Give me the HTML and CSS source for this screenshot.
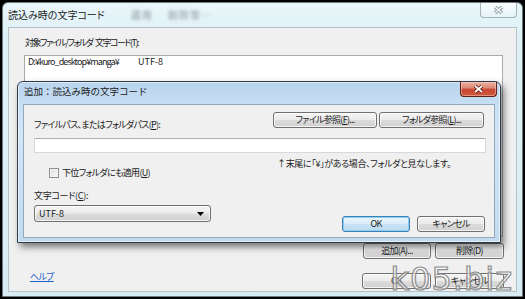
FILE: index.html
```html
<!DOCTYPE html>
<html lang="ja">
<head>
<meta charset="utf-8">
<title>読込み時の文字コード</title>
<link rel="stylesheet" href="styles.css">
</head>
<body>
<div class="desktop">
  <div class="win outer">
    <div class="titlebar">
      <span class="title">読込み時の文字コード</span>
      <span class="ghost">適用 <span class="ghost-gap"></span>削除等…</span>
      <span class="close inactive">
        <svg width="13" height="10" viewBox="0 0 13 10"><path class="x-out" d="M3 2 L10 8 M10 2 L3 8"/><path class="x-in" d="M3 2 L10 8 M10 2 L3 8"/></svg>
      </span>
    </div>
    <div class="client">
      <div class="label outer-label">対象ファイル/フォルダ 文字コード(T):</div>
      <div class="listbox">
        <div class="list-row"><span class="path">D:¥kuro_desktop¥manga¥</span><span class="code">UTF-8</span></div>
      </div>
      <div class="btn-row">
        <div class="btn w68">追加(A)...</div>
        <div class="btn w69">削除(D)</div>
      </div>
      <div class="footer">
        <a class="help" href="#">ヘルプ</a>
        <div class="btn-row tight">
          <div class="btn w69">OK</div>
          <div class="btn w69">キャンセル</div>
        </div>
      </div>
    </div>
  </div>

  <div class="win inner">
    <div class="titlebar">
      <span class="title">追加：読込み時の文字コード</span>
      <span class="close active">
        <svg width="13" height="10" viewBox="0 0 13 10"><path class="x-out" d="M3 2 L10 8 M10 2 L3 8"/><path class="x-in" d="M3 2 L10 8 M10 2 L3 8"/></svg>
      </span>
    </div>
    <div class="client">
      <div class="row1">
        <div class="label">ファイルパス、またはフォルダパス(<u>P</u>):</div>
        <div class="browse">
          <div class="btn w104">ファイル参照(<u>F</u>)...</div>
          <div class="btn w105">フォルダ参照(<u>L</u>)...</div>
        </div>
      </div>
      <div class="textbox"></div>
      <div class="note">↑末尾に「¥」がある場合、フォルダと見なします。</div>
      <div class="check-row">
        <span class="checkbox"></span>
        <span class="label">下位フォルダにも適用(<u>U</u>)</span>
      </div>
      <div class="label code-label">文字コード(<u>C</u>):</div>
      <div class="bottom-row">
        <div class="combo">
          <span>UTF-8</span>
          <svg width="7" height="4" viewBox="0 0 7 4"><path d="M0 0 H7 L3.5 4 Z" fill="#000"/></svg>
        </div>
        <div class="dlg-btns">
          <div class="btn default w68">OK</div>
          <div class="btn w68">キャンセル</div>
        </div>
      </div>
    </div>
  </div>

  <div class="watermark">k05.biz</div>
</div>
</body>
</html>
```
FILE: styles.css
```css
* { box-sizing: border-box; margin: 0; padding: 0; }
html, body { width: 525px; height: 299px; overflow: hidden; }
body {
  background: #000;
  font-family: "Noto Sans CJK JP", "Noto Sans", sans-serif;
  font-size: 10px;
  line-height: 12px;
  color: #1a1a1a;
  font-feature-settings: "palt";
}
u { text-decoration: underline; text-underline-offset: 1px; }

.desktop { position: relative; width: 525px; height: 299px; padding: 2px; }

.win { display: flex; flex-direction: column; }
.titlebar { display: flex; align-items: flex-start; flex: none; }
.title { white-space: nowrap; }

/* body text of dialogs: condensed like Meiryo UI */
.client { font-size: 9px; letter-spacing: -0.7px; }

/* outer (inactive) window */
.outer {
  width: 521px; height: 295px;
  border: 1px solid #6e7b83;
  border-radius: 6px 6px 0 0;
  background: linear-gradient(180deg, #eaf6f9 0%, #dff1f6 10%, #d7edf3 100%);
  padding: 0 5px 4px 5px;
}
.outer .titlebar { height: 24px; }
.outer .title { margin: 6px 0 0 0; color: #222; }
.ghost {
  margin: 6px 0 0 26px;
  color: rgba(40, 50, 60, 0.32);
  filter: blur(1.4px);
  white-space: nowrap;
  font-weight: bold;
  letter-spacing: 1px;
}
.ghost-gap { display: inline-block; width: 12px; }
.close {
  margin-left: auto;
  width: 37px; height: 15px;
  display: flex; align-items: center; justify-content: center;
  border-radius: 0 0 4px 4px;
}
.close.inactive {
  border: 1px solid #a3b2ba; border-top: none;
  background: linear-gradient(180deg, rgba(255,255,255,.75), rgba(230,244,248,.6));
}
.close.inactive .x-out { stroke: #8f9ca4; stroke-width: 3.6; fill: none; }
.close.inactive .x-in { stroke: #f4f8fa; stroke-width: 1.6; fill: none; }

.outer .client {
  flex: 1;
  background: #f0f0f0;
  border: 1px solid #b5c2c9;
  padding: 9px 12px 0 15px;
  display: flex; flex-direction: column;
}
.outer-label { margin-left: 1px; letter-spacing: -1.5px; word-spacing: 2px; }
.listbox {
  width: 479px; height: 182px;
  margin-top: 6px;
  background: #fff;
  border: 1px solid #a7aab0;
  padding: 0 0 0 3px;
}
.list-row { display: grid; grid-template-columns: 110px auto; line-height: 12px; }
.path { letter-spacing: -0.9px; white-space: nowrap; }
.code { letter-spacing: 0; }

.btn-row { display: flex; justify-content: flex-end; gap: 4px; margin-top: 6px; }
.btn-row.tight { margin-top: 0; }
.footer { display: flex; justify-content: space-between; align-items: flex-start; margin-top: 14px; }
.help { color: #1a63c9; text-decoration: underline; margin: -2px 0 0 6px; }

.btn {
  height: 16px;
  border: 1px solid #707070;
  border-radius: 3px;
  background: linear-gradient(180deg, #f4f4f4 0%, #ebebeb 48%, #dcdcdc 52%, #d0d0d0 100%);
  box-shadow: inset 0 0 0 1px rgba(255,255,255,.75);
  display: flex; align-items: center; justify-content: center;
  white-space: nowrap;
  color: #1a1a1a;
}
.btn.default {
  border-color: #3c7fb1;
  box-shadow: inset 0 0 0 1px #8ed0f5;
  background: linear-gradient(180deg, #eaf6fd 0%, #dcedf8 48%, #c8e2f4 52%, #bcdaf0 100%);
}
.w68 { width: 68px; } .w69 { width: 69px; }
.w104 { width: 104px; } .w105 { width: 105px; }

/* inner (active) dialog */
.inner {
  position: absolute; left: 17px; top: 81px;
  width: 484px; height: 162px;
  border: 1px solid #2f3c48;
  border-radius: 6px 6px 0 0;
  background: linear-gradient(180deg, #b9d4ee 0%, #c7def3 14%, #d1e5f6 30%, #c3daf0 100%);
  box-shadow: inset 0 0 0 1px rgba(255,255,255,.55), 3px 4px 7px rgba(0,0,0,.5);
  padding: 0 5px 4px 5px;
}
.inner .titlebar { height: 22px; }
.inner .title { margin: 3px 0 0 1px; color: #1c1c1c; font-size: 9.5px; font-feature-settings: normal; }
.close.active {
  margin-right: -2px;
  border: 1px solid #5e2117; border-top: none;
  background: linear-gradient(180deg, #eab0a1 0%, #df8b78 40%, #c84530 55%, #d0583f 100%);
  box-shadow: inset 0 0 0 1px rgba(255,220,210,.45);
}
.close.active .x-out { stroke: #5b1e14; stroke-width: 3.6; fill: none; }
.close.active .x-in { stroke: #ffffff; stroke-width: 1.7; fill: none; }

.inner .client {
  flex: 1;
  background: #f0f0f0;
  border: 1px solid #92a8bd;
  padding: 9px 10px 0 10px;
  display: flex; flex-direction: column;
}
.row1 { display: flex; justify-content: space-between; align-items: flex-end; height: 14px; }
.row1 .label { margin-bottom: -3px; }
.browse { display: flex; gap: 2px; }
.textbox {
  height: 15px;
  margin: 10px -2px 0 0;
  background: #fff;
  border: 1px solid #d5d8de;
  border-top-color: #abadb3;
}
.note { margin: 5px 0 0 243px; white-space: nowrap; letter-spacing: -0.35px; }
.check-row { display: flex; align-items: center; margin: -3px 0 0 15px; height: 11px; }
.checkbox {
  width: 10px; height: 10px;
  border: 1px solid #8e8f8f;
  background: linear-gradient(135deg, #dcdcdc, #fbfbfb);
  box-shadow: inset 0 0 0 1px #f4f4f4;
  margin-right: 3px;
}
.code-label { margin-top: 12px; letter-spacing: -0.3px; }
.bottom-row { display: flex; justify-content: space-between; align-items: flex-start; margin-top: 3px; }
.combo {
  width: 177px; height: 17px;
  border: 1px solid #707070;
  border-radius: 3px;
  background: linear-gradient(180deg, #f4f4f4 0%, #ebebeb 48%, #dcdcdc 52%, #d2d2d2 100%);
  box-shadow: inset 0 0 0 1px rgba(255,255,255,.75);
  display: flex; align-items: center; justify-content: space-between;
  padding: 0 6px 0 4px;
  letter-spacing: 0;
}
.dlg-btns { display: flex; gap: 7px; margin: 11px -1px 0 0; }

.watermark {
  position: absolute; right: 12px; bottom: 3px;
  font-family: "DejaVu Sans", sans-serif;
  font-size: 32px;
  line-height: 34px;
  letter-spacing: 1px;
  color: rgba(255,255,255,.55);
  -webkit-text-stroke: 1.2px #8c8c8c;
}
```
